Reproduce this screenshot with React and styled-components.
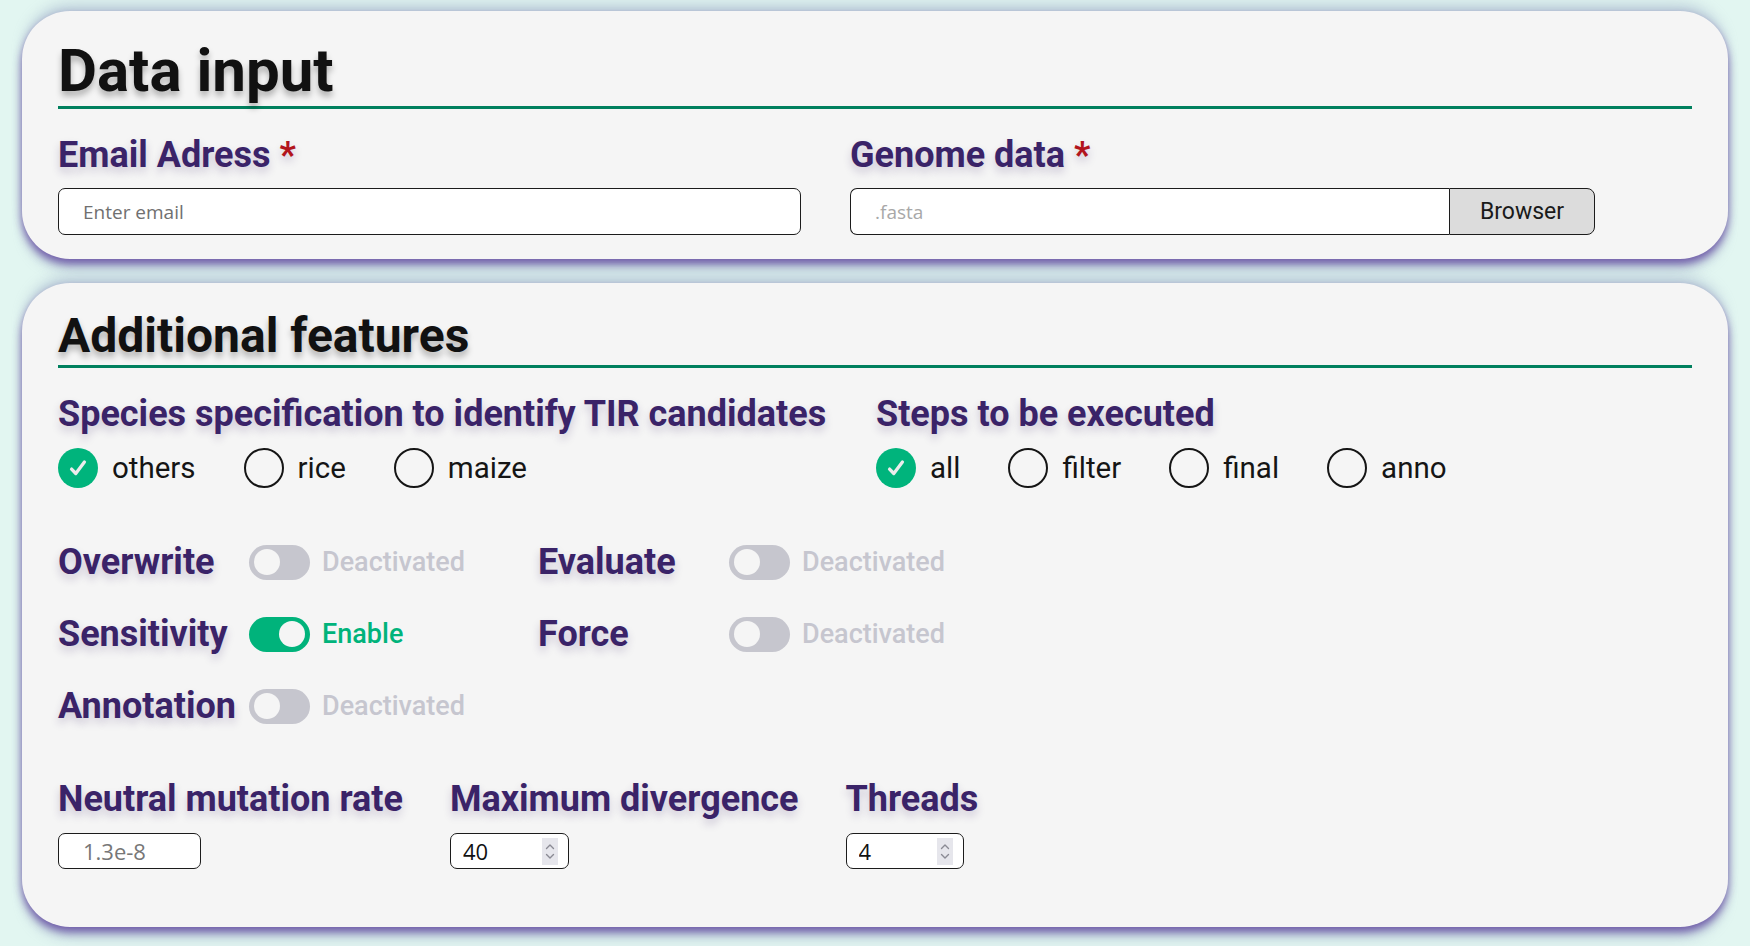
import React from "react";
import styled, { createGlobalStyle } from "styled-components";

const GlobalStyle = createGlobalStyle`
  html, body { margin: 0; padding: 0; }
  body {
    background: #e2f6f1;
    font-family: Roboto, "Liberation Sans", sans-serif;
    min-height: 946px;
  }
  * { box-sizing: border-box; }
`;

const Page = styled.main`
  display: flex;
  flex-direction: column;
  gap: 24px;
  padding: 11px 22px 0;
`;

const Card = styled.section`
  background: #f5f5f5;
  border-radius: 48px;
  padding: 24px 36px ${(p) => p.$padBottom}px;
  box-shadow: 0 5px 8px rgba(98, 72, 160, 0.85),
    0 -10px 14px -4px rgba(172, 188, 208, 0.75),
    0 14px 14px -4px rgba(172, 188, 208, 0.75);
`;

const SectionTitle = styled.h1`
  margin: 0;
  font-family: Roboto, "Liberation Sans", sans-serif;
  font-weight: 700;
  font-size: ${(p) => p.$size}px;
  line-height: ${(p) => p.$lh}px;
  color: #111111;
  border-bottom: 3px solid #00805e;
  text-shadow: 0 5px 6px rgba(0, 0, 0, 0.28);
`;

const FieldLabel = styled.div`
  font-family: Roboto, "Liberation Sans", sans-serif;
  font-weight: 700;
  font-size: 36px;
  line-height: ${(p) => p.$lh || 42}px;
  color: #3a2368;
  text-shadow: 0 5px 8px rgba(58, 35, 104, 0.22);
  white-space: nowrap;
`;

const Asterisk = styled.span`
  color: #b2141c;
  margin-left: 9px;
`;

const FieldRow = styled.div`
  display: flex;
  gap: 49px;
  margin-top: 25px;
`;

const Field = styled.div`
  display: flex;
  flex-direction: column;
  gap: 12px;
  width: ${(p) => p.$width}px;
`;

const TextInput = styled.input`
  height: 47px;
  width: 100%;
  border: 1.5px solid #1c1c1c;
  border-radius: 7px;
  background: #ffffff;
  padding: 0 24px;
  font-family: "Open Sans", "DejaVu Sans", sans-serif;
  font-size: 19px;
  color: #222;
  outline: none;
  &::placeholder { color: ${(p) => p.$ph || "#707070"}; }
`;

const FileGroup = styled.div`
  display: flex;
  height: 47px;
`;

const FileInput = styled(TextInput)`
  flex: 1;
  border-radius: 7px 0 0 7px;
  border-right: none;
`;

const BrowseButton = styled.button`
  width: 146px;
  height: 47px;
  border: 1.5px solid #1c1c1c;
  border-radius: 0 8px 8px 0;
  background: #dcdcdc;
  font-family: Roboto, "Liberation Sans", sans-serif;
  font-size: 23px;
  color: #1a1a1a;
  padding: 0;
  cursor: pointer;
`;

const OptionsRow = styled.div`
  display: flex;
  margin-top: 27px;
`;

const OptionGroup = styled.div`
  width: ${(p) => p.$width || "auto"};
  display: flex;
  flex-direction: column;
  gap: 15px;
`;

const RadioList = styled.div`
  display: flex;
  gap: 48px;
  height: 40px;
  align-items: center;
`;

const RadioItem = styled.label`
  display: flex;
  align-items: center;
  gap: 14px;
  font-family: Roboto, "Liberation Sans", sans-serif;
  font-size: 29.5px;
  color: #151515;
  cursor: pointer;
`;

const RadioDot = styled.span`
  width: 40px;
  height: 40px;
  border-radius: 50%;
  display: flex;
  align-items: center;
  justify-content: center;
  background: ${(p) => (p.$checked ? "#00b47c" : "transparent")};
  border: ${(p) => (p.$checked ? "none" : "2.5px solid #151515")};
`;

const ToggleGrid = styled.div`
  display: grid;
  grid-template-columns: 480px 480px;
  row-gap: 30px;
  margin-top: 53px;
`;

const ToggleItem = styled.div`
  display: flex;
  align-items: center;
  height: 42px;
`;

const ToggleLabel = styled(FieldLabel)`
  width: 191px;
`;

const Switch = styled.span`
  position: relative;
  width: 61px;
  height: 35px;
  border-radius: 18px;
  background: ${(p) => (p.$on ? "#00b37b" : "#c6c6ce")};
  flex-shrink: 0;
  &::after {
    content: "";
    position: absolute;
    top: 4.5px;
    left: ${(p) => (p.$on ? "30px" : "5px")};
    width: 26px;
    height: 26px;
    border-radius: 50%;
    background: #f5f5f5;
  }
`;

const SwitchText = styled.span`
  margin-left: 12px;
  font-family: Roboto, "Liberation Sans", sans-serif;
  font-weight: 500;
  font-size: 27px;
  color: ${(p) => (p.$on ? "#00b37b" : "#c6c6cf")};
`;

const ParamRow = styled.div`
  display: flex;
  gap: 47px;
  margin-top: 51px;
`;

const ParamField = styled.div`
  display: flex;
  flex-direction: column;
  align-items: flex-start;
  gap: 13px;
`;

const BoxFrame = styled.div`
  display: flex;
  align-items: center;
  width: ${(p) => p.$width}px;
  height: 36px;
  border: 1px solid #1c1c1c;
  border-radius: 7px;
  background: #fff;
  padding: 0 10px 0 ${(p) => p.$padLeft}px;
`;

const BoxInput = styled.input`
  flex: 1;
  min-width: 0;
  height: 100%;
  border: none;
  background: transparent;
  padding: 0;
  font-family: "Open Sans", "DejaVu Sans", sans-serif;
  font-size: 22px;
  color: #111;
  outline: none;
  &::placeholder { color: #777; }
`;

const Spinner = styled.span`
  width: 16px;
  height: 27px;
  background: #e6e6ec;
  display: flex;
  flex-direction: column;
  align-items: center;
  justify-content: center;
  gap: 3px;
  flex-shrink: 0;
`;

const Chevron = ({ up }) => (
  <svg width="10" height="7" viewBox="0 0 10 7" fill="none">
    <path
      d={up ? "M1.5 5.5 L5 2 L8.5 5.5" : "M1.5 1.5 L5 5 L8.5 1.5"}
      stroke="#8a8a94"
      strokeWidth="1.4"
      strokeLinecap="round"
      strokeLinejoin="round"
    />
  </svg>
);

const NumberBox = ({ value, width }) => (
  <BoxFrame $width={width} $padLeft={12}>
    <BoxInput type="text" inputMode="numeric" defaultValue={value} />
    <Spinner>
      <Chevron up />
      <Chevron />
    </Spinner>
  </BoxFrame>
);

const Check = () => (
  <svg width="22" height="22" viewBox="0 0 24 24" fill="none">
    <path d="M5 13.2 L9.6 18 L19 5.5" stroke="#ececec" strokeWidth="3.6" strokeLinecap="round" strokeLinejoin="round" />
  </svg>
);

const Radio = ({ label, checked }) => (
  <RadioItem>
    <RadioDot $checked={checked}>{checked && <Check />}</RadioDot>
    {label}
  </RadioItem>
);

const Toggle = ({ label, on }) => (
  <ToggleItem>
    <ToggleLabel>{label}</ToggleLabel>
    <Switch $on={on} />
    <SwitchText $on={on}>{on ? "Enable" : "Deactivated"}</SwitchText>
  </ToggleItem>
);

export default function App() {
  return (
    <>
      <GlobalStyle />
      <Page>
        <Card $padBottom={24}>
          <SectionTitle $size={60} $lh={71}>Data input</SectionTitle>
          <FieldRow>
            <Field $width={743}>
              <FieldLabel>
                Email Adress<Asterisk>*</Asterisk>
              </FieldLabel>
              <TextInput type="email" placeholder="Enter email" />
            </Field>
            <Field $width={745}>
              <FieldLabel>
                Genome data<Asterisk>*</Asterisk>
              </FieldLabel>
              <FileGroup>
                <FileInput type="text" placeholder=".fasta" $ph="#a8a8a8" />
                <BrowseButton type="button">Browser</BrowseButton>
              </FileGroup>
            </Field>
          </FieldRow>
        </Card>

        <Card $padBottom={58}>
          <SectionTitle $size={48} $lh={58}>Additional features</SectionTitle>
          <OptionsRow>
            <OptionGroup $width="818px">
              <FieldLabel $lh={38}>
                Species specification to identify TIR candidates
              </FieldLabel>
              <RadioList>
                <Radio label="others" checked />
                <Radio label="rice" />
                <Radio label="maize" />
              </RadioList>
            </OptionGroup>
            <OptionGroup>
              <FieldLabel $lh={38}>Steps to be executed</FieldLabel>
              <RadioList>
                <Radio label="all" checked />
                <Radio label="filter" />
                <Radio label="final" />
                <Radio label="anno" />
              </RadioList>
            </OptionGroup>
          </OptionsRow>

          <ToggleGrid>
            <Toggle label="Overwrite" />
            <Toggle label="Evaluate" />
            <Toggle label="Sensitivity" on />
            <Toggle label="Force" />
            <Toggle label="Annotation" />
          </ToggleGrid>

          <ParamRow>
            <ParamField>
              <FieldLabel>Neutral mutation rate</FieldLabel>
              <BoxFrame $width={143} $padLeft={24}>
                <BoxInput type="text" placeholder="1.3e-8" />
              </BoxFrame>
            </ParamField>
            <ParamField>
              <FieldLabel>Maximum divergence</FieldLabel>
              <NumberBox value="40" width={119} />
            </ParamField>
            <ParamField>
              <FieldLabel>Threads</FieldLabel>
              <NumberBox value="4" width={118} />
            </ParamField>
          </ParamRow>
        </Card>
      </Page>
    </>
  );
}
